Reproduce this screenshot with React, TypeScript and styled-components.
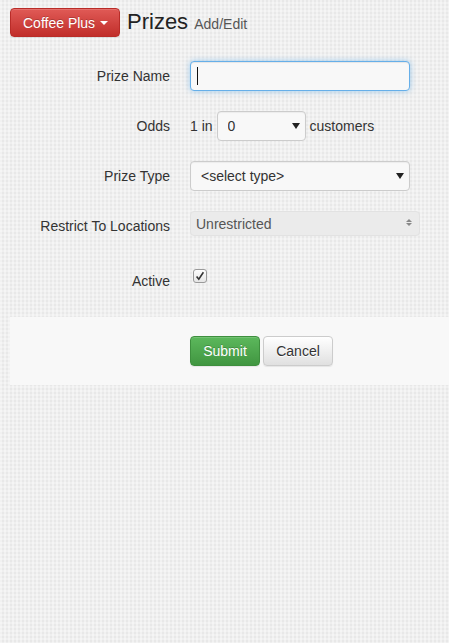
import React from 'react';
import styled, { createGlobalStyle, css } from 'styled-components';

const GlobalStyle = createGlobalStyle`
  html, body {
    margin: 0;
    min-height: 100%;
  }
  body {
    min-height: 643px;
    font-family: "Liberation Sans", Arial, sans-serif;
    font-size: 14px;
    line-height: 20px;
    color: #333;
    background-color: #e8e8e8;
    background-image:
      linear-gradient(90deg, rgba(255,255,255,0.4) 50%, transparent 50%),
      linear-gradient(0deg, rgba(255,255,255,0.3) 50%, transparent 50%);
    background-size: 4px 4px, 4px 4px;
  }
`;

const Page = styled.div`
  padding: 8px 0 0 10px;
`;

const Header = styled.header`
  display: flex;
  align-items: center;
  gap: 7px;
  height: 29px;
`;

const gloss = css`
  text-shadow: 0 -1px 0 rgba(0, 0, 0, 0.2);
  box-shadow: inset 0 1px 0 rgba(255, 255, 255, 0.15), 0 1px 1px rgba(0, 0, 0, 0.075);
`;

const BrandButton = styled.button`
  ${gloss};
  display: flex;
  align-items: center;
  gap: 5px;
  height: 29px;
  width: 110px;
  padding: 0 0 0 12px;
  font: 14px "Liberation Sans", Arial, sans-serif;
  color: #fff;
  border: 1px solid #b92c28;
  border-radius: 4px;
  background: linear-gradient(to bottom, #e05a56 0%, #c12e2a 100%);
`;

const Caret = styled.span`
  display: inline-block;
  width: 0;
  height: 0;
  border-top: 4px solid #fff;
  border-left: 4px solid transparent;
  border-right: 4px solid transparent;
`;

const Title = styled.h1`
  margin: 0;
  font-size: 22px;
  font-weight: normal;
  line-height: 29px;
  color: #222;
`;

const SubTitle = styled.small`
  font-size: 14px;
  color: #555;
`;

const Form = styled.form`
  display: flex;
  flex-direction: column;
  gap: 20px;
  margin-top: 24px;
`;

const Row = styled.div<{ $offset?: number }>`
  display: grid;
  grid-template-columns: 160px 1fr;
  column-gap: 20px;
  align-items: start;
  min-height: 30px;
  margin-top: ${p => p.$offset ?? 0}px;
`;

const Label = styled.label`
  text-align: right;
  padding-top: 5px;
  line-height: 20px;
  color: #333;
`;

const Field = styled.div`
  display: flex;
  align-items: center;
  gap: 4px;
`;

const Inline = styled.span`
  color: #333;
`;

const control = css`
  box-sizing: border-box;
  height: 30px;
  font: 14px "Liberation Sans", Arial, sans-serif;
  color: #333;
  background: #f8f8f8;
  border: 1px solid #ccc;
  border-radius: 4px;
  box-shadow: inset 0 1px 1px rgba(0, 0, 0, 0.05);
`;

const InputWrap = styled.div`
  position: relative;
  width: 220px;
`;

const TextInput = styled.input<{ $focused?: boolean }>`
  ${control};
  width: 100%;
  padding: 0 6px;
  outline: none;
  ${p => p.$focused && css`
    border-color: #66afe9;
    box-shadow: inset 0 1px 1px rgba(0, 0, 0, 0.075), 0 0 6px rgba(102, 175, 233, 0.6);
  `}
`;

const TextCaret = styled.span`
  position: absolute;
  left: 7px;
  top: 6px;
  width: 1px;
  height: 18px;
  background: #111;
  pointer-events: none;
`;

const SelectWrap = styled.div<{ $width: number; $disabled?: boolean }>`
  position: relative;
  width: ${p => p.$width}px;
  &::after {
    content: "";
    position: absolute;
    right: 6px;
    top: 12px;
    width: 0;
    height: 0;
    border-top: 6px solid #222;
    border-left: 4px solid transparent;
    border-right: 4px solid transparent;
    pointer-events: none;
    ${p => p.$disabled && css`display: none;`}
  }
`;

const Select = styled.select<{ $pad: number }>`
  ${control};
  width: 100%;
  padding: 0 20px 0 ${p => p.$pad}px;
  appearance: none;
  -webkit-appearance: none;
  outline: none;
  &:disabled {
    height: 25px;
    color: #555;
    background: #ebebeb;
    border-color: #e2e2e2;
    box-shadow: none;
    opacity: 1;
  }
`;

const Spinner = styled.span`
  position: absolute;
  right: 8px;
  top: 8px;
  display: flex;
  flex-direction: column;
  gap: 1px;
  pointer-events: none;
  &::before, &::after {
    content: "";
    width: 0;
    height: 0;
    border-left: 3px solid transparent;
    border-right: 3px solid transparent;
  }
  &::before { border-bottom: 3px solid #888; }
  &::after { border-top: 3px solid #888; }
`;

const CheckBox = styled.span`
  box-sizing: border-box;
  display: flex;
  align-items: center;
  justify-content: center;
  width: 14px;
  height: 14px;
  margin: 3px 0 0 3px;
  border: 1px solid #9a9a9a;
  border-radius: 3px;
  background: linear-gradient(to bottom, #fdfdfd, #e6e6e6);
`;

const Footer = styled.div`
  display: flex;
  gap: 3px;
  margin-top: 21px;
  padding: 19px 0 19px 180px;
  background: #f8f8f8;
`;

const Button = styled.button<{ $variant: 'success' | 'default' }>`
  ${gloss};
  width: 70px;
  height: 30px;
  padding: 0;
  font: 14px "Liberation Sans", Arial, sans-serif;
  border-radius: 4px;
  ${p => p.$variant === 'success' ? css`
    color: #fff;
    border: 1px solid #3e8f3e;
    background: linear-gradient(to bottom, #5cb85c 0%, #419641 100%);
  ` : css`
    color: #333;
    text-shadow: 0 1px 0 #fff;
    border: 1px solid #ccc;
    background: linear-gradient(to bottom, #fff 0%, #e0e0e0 100%);
  `}
`;

export default function App() {
  return (
    <>
      <GlobalStyle />
      <Page>
        <Header>
          <BrandButton type="button">
            Coffee Plus <Caret />
          </BrandButton>
          <Title>
            Prizes <SubTitle>Add/Edit</SubTitle>
          </Title>
        </Header>

        <Form onSubmit={e => e.preventDefault()}>
          <Row>
            <Label>Prize Name</Label>
            <InputWrap>
              <TextInput $focused type="text" defaultValue="" />
              <TextCaret />
            </InputWrap>
          </Row>

          <Row>
            <Label>Odds</Label>
            <Field>
              <Inline>1 in</Inline>
              <SelectWrap $width={89}>
                <Select $pad={10} defaultValue="0">
                  <option value="0">0</option>
                  <option value="10">10</option>
                  <option value="100">100</option>
                </Select>
              </SelectWrap>
              <Inline>customers</Inline>
            </Field>
          </Row>

          <Row>
            <Label>Prize Type</Label>
            <SelectWrap $width={220}>
              <Select $pad={10} defaultValue="">
                <option value="">&lt;select type&gt;</option>
              </Select>
            </SelectWrap>
          </Row>

          <Row>
            <Label>Restrict To Locations</Label>
            <SelectWrap $width={230} $disabled>
              <Select $pad={5} disabled defaultValue="all">
                <option value="all">Unrestricted</option>
              </Select>
              <Spinner />
            </SelectWrap>
          </Row>

          <Row $offset={5}>
            <Label>Active</Label>
            <Field>
              <CheckBox>
                <svg width="10" height="10" viewBox="0 0 10 10">
                  <path d="M1.6 5.4 L3.8 8.2 L8.4 1.2" fill="none" stroke="#333" strokeWidth="1.6" />
                </svg>
              </CheckBox>
            </Field>
          </Row>
        </Form>

        <Footer>
          <Button $variant="success" type="button">Submit</Button>
          <Button $variant="default" type="button">Cancel</Button>
        </Footer>
      </Page>
    </>
  );
}
